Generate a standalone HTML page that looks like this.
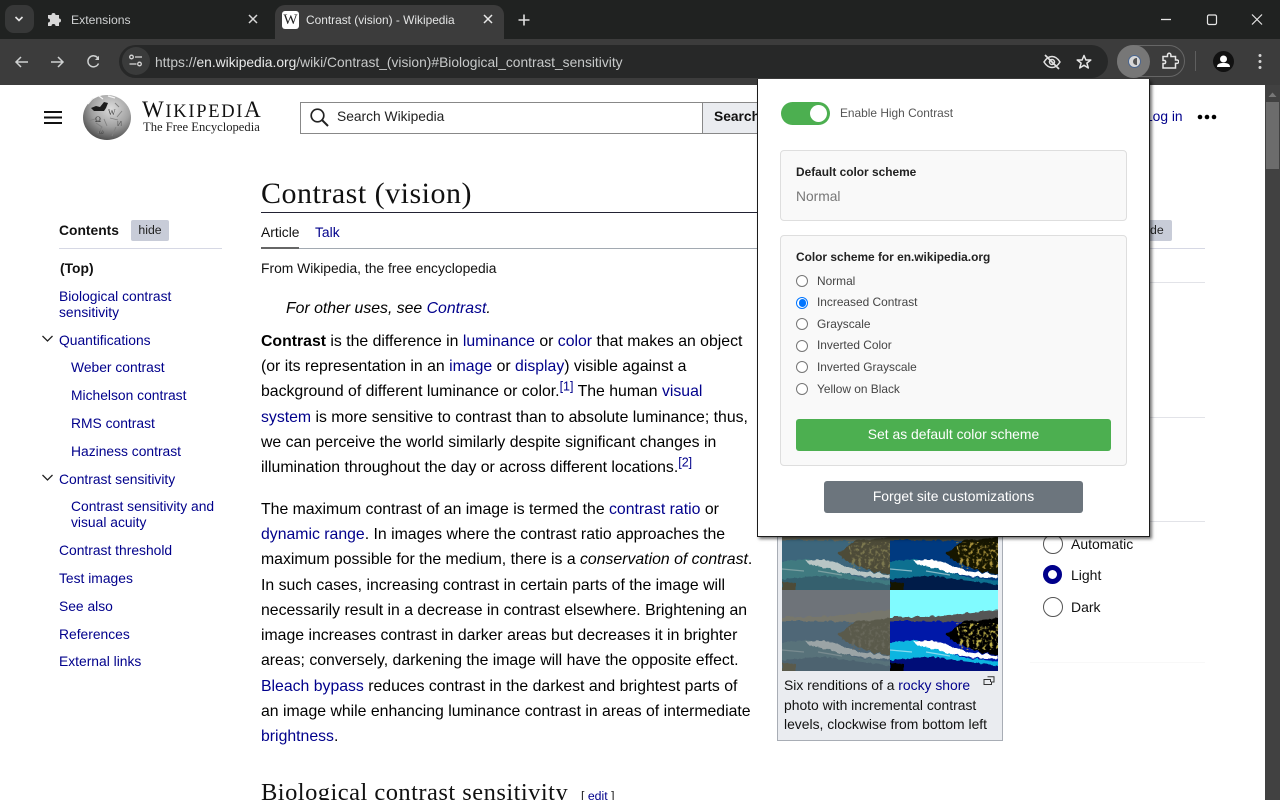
<!DOCTYPE html>
<html lang="en"><head><meta charset="utf-8"><title>Contrast (vision) - Wikipedia</title>
<style>
html,body{margin:0;padding:0;width:1280px;height:800px;overflow:hidden;background:#fff}
body{position:relative;font-family:"Liberation Sans",sans-serif;color:#000}
.a{position:absolute}
.t{position:absolute;white-space:nowrap;line-height:20px}
a{color:#00008b;text-decoration:none}
.b{font-size:15.82px;margin-top:1px}
sup{font-size:12.5px;line-height:0;vertical-align:5.5px}
.toc{font-size:13.85px;color:#00008b}
.rl{font-size:11.9px;color:#444;left:817px}
.rd{position:absolute;left:796px;width:10px;height:10px;border:1.3px solid #767676;border-radius:50%;background:#fff}
.bx{position:absolute;left:780px;width:345px;background:#f9f9f9;border:1px solid #dedede;border-radius:4px}
.btn{position:absolute;border-radius:3px;color:#fff;text-align:center;font-size:13.9px;line-height:30px}
.vr{position:absolute;width:18px;height:18px;border:1px solid #555;border-radius:50%;left:1043px;background:#fff}
</style></head><body>

<!-- Browser frame -->
<div class="a" style="left:0;top:0;width:1280px;height:39px;background:#202221"></div>
<div class="a" style="left:0;top:39px;width:1280px;height:46px;background:#3c3c3c"></div>
<div class="a" style="left:5px;top:5px;width:29px;height:28px;border-radius:9px;background:#373838"></div>
<svg class="a" style="left:13px;top:14px" width="12" height="10"><path d="M2.5 3 L6 6.500 L9.500 3" fill="none" stroke="#e6e6e6" stroke-width="1.600"/></svg>
<svg class="a" style="left:47px;top:12px" width="16" height="16" viewBox="0 0 16 16"><path fill="#d8d8d8" d="M1 4h3.500a2 2 0 1 1 4 0H12v3.500a2 2 0 1 1 0 4V15H8.500a2 2 0 1 0-4 0H1v-3.500a2 2 0 1 0 0-4z" transform="translate(0 -1)"/></svg>
<div class="t" style="left:71px;top:10px;font-size:12.200px;color:#cfd1d2">Extensions</div>
<svg class="a" style="left:247px;top:13px" width="12" height="12"><path d="M2 2 L10 10 M10 2 L2 10" stroke="#d8d8d8" stroke-width="1.500"/></svg>

<div class="a" style="left:275px;top:5px;width:229px;height:34px;background:#3c3c3c;border-radius:10px 10px 0 0"></div>
<div class="a" style="left:282px;top:11px;width:17px;height:18px;background:#fff;border-radius:3px;font:15px/18px 'Liberation Serif',serif;color:#222;text-align:center">W</div>
<div class="t" style="left:306px;top:10px;font-size:11.900px;color:#e3e4e4">Contrast (vision) - Wikipedia</div>
<svg class="a" style="left:482px;top:13px" width="12" height="12"><path d="M2 2 L10 10 M10 2 L2 10" stroke="#e8e8e8" stroke-width="1.500"/></svg>
<svg class="a" style="left:517px;top:13px" width="14" height="14"><path d="M7 1.500V12.500M1.500 7H12.500" stroke="#e0e0e0" stroke-width="1.600"/></svg>
<svg class="a" style="left:1160px;top:12px" width="104" height="16"><path d="M1 7.500H11" stroke="#e6e6e6" stroke-width="1.300"/><rect x="47.500" y="3" width="9" height="9.500" rx="1.500" fill="none" stroke="#e6e6e6" stroke-width="1.200"/><path d="M92 2.500L102 12.500M102 2.500L92 12.500" stroke="#e6e6e6" stroke-width="1.200"/></svg>

<!-- toolbar -->
<svg class="a" style="left:14px;top:53px" width="90" height="18" viewBox="0 0 90 18"><g fill="none" stroke="#cfd1d1" stroke-width="1.500"><path d="M2 9H14M7 4L2 9L7 14"/><path d="M37 9H49M44 4L49 9L44 14"/><path d="M84 5.200A5.500 5.500 0 1 0 84.500 10.500"/></g><path d="M85 2.800V7H81z" fill="#cfd1d1"/></svg>
<div class="a" style="left:119px;top:45px;width:989px;height:33px;border-radius:17px;background:#272828"></div>
<div class="a" style="left:122px;top:47px;width:28px;height:28px;border-radius:50%;background:#3a3b3b"></div>
<svg class="a" style="left:128px;top:53px" width="16" height="16"><g fill="none" stroke="#d4d4d4" stroke-width="1.300"><circle cx="3.500" cy="4" r="1.800"/><path d="M7 4H14"/><circle cx="11.500" cy="11" r="1.800"/><path d="M1.500 11H8.500"/></g></svg>
<div class="t" style="left:155px;top:52px;font-size:13.820px;color:#c7c9c9">https://<span style="color:#e9eaea">en.wikipedia.org</span>/wiki/Contrast_(vision)#Biological_contrast_sensitivity</div>
<svg class="a" style="left:1042px;top:53px" width="20" height="18" viewBox="0 0 20 18"><path d="M2 9C4.500 5 7 3.500 10 3.500S15.500 5 18 9C15.500 13 13 14.500 10 14.500S4.500 13 2 9Z" fill="none" stroke="#e0e0e0" stroke-width="1.500"/><circle cx="10" cy="9" r="2.500" fill="none" stroke="#e0e0e0" stroke-width="1.500"/><path d="M3 2L17 16" stroke="#e0e0e0" stroke-width="1.700"/></svg>
<svg class="a" style="left:1076px;top:54px" width="16" height="16" viewBox="0 0 16 16"><path d="M8 1.500L9.900 6H14.800L10.900 9.100L12.300 14L8 11.200L3.700 14L5.100 9.100L1.200 6H6.100Z" fill="none" stroke="#e6e6e6" stroke-width="1.500" stroke-linejoin="round"/></svg>
<div class="a" style="left:1117px;top:45px;width:68px;height:32px;border:1px solid #666;border-radius:17px;box-sizing:border-box"></div>
<div class="a" style="left:1117px;top:45px;width:33px;height:33px;border-radius:50%;background:#777"></div>
<div class="a" style="left:1128px;top:55px;width:13px;height:13px;border-radius:50%;background:#d7d7d7;border:1px solid #4a6690;box-sizing:border-box"></div>
<div class="a" style="left:1133px;top:58px;width:3.500px;height:7px;background:#555;border-radius:4px 0 0 4px"></div>
<svg class="a" style="left:1161px;top:52px" width="18" height="18" viewBox="0 0 18 18"><path d="M2 4.500H6.500V3A1.700 1.700 0 0 1 9.900 3V4.500H14.500V8H16A1.700 1.700 0 0 1 16 11.400H14.500V16H2V11.500H4A2 2 0 0 0 4 8.500H2Z" fill="none" stroke="#e6e6e6" stroke-width="1.500"/></svg>
<div class="a" style="left:1195px;top:51px;width:1px;height:20px;background:#5f5f5f"></div>
<div class="a" style="left:1213px;top:51px;width:21px;height:21px;border-radius:50%;background:#111"></div>
<svg class="a" style="left:1213px;top:51px" width="21" height="21"><circle cx="10.500" cy="8" r="3.500" fill="#fff"/><path d="M4 16C4 12.500 7 12 10.500 12S17 12.500 17 16Z" fill="#fff"/></svg>
<svg class="a" style="left:1257px;top:53px" width="6" height="18"><circle cx="3" cy="2.500" r="1.500" fill="#d6d6d6"/><circle cx="3" cy="8.500" r="1.500" fill="#d6d6d6"/><circle cx="3" cy="14.500" r="1.500" fill="#d6d6d6"/></svg>

<!-- Scrollbar -->
<div class="a" style="left:1265px;top:85px;width:15px;height:715px;background:#414141"></div>
<svg class="a" style="left:1266px;top:90px" width="13" height="8"><path d="M2.500 7L6.500 2.500L10.500 7Z" fill="#777"/></svg>
<div class="a" style="left:1266px;top:102px;width:13px;height:67px;background:#6c6c6c"></div>

<!-- Wikipedia header -->
<svg class="a" style="left:44px;top:111px" width="18" height="14"><path d="M0 1H18M0 6.500H18M0 12H18" stroke="#111" stroke-width="2"/></svg>
<svg class="a" style="left:82px;top:93px" width="50" height="48" viewBox="0 0 50 48">
<defs><radialGradient id="g" cx=".58" cy=".3" r=".8"><stop offset="0" stop-color="#dcdcdc"/><stop offset=".5" stop-color="#a2a2a2"/><stop offset="1" stop-color="#383838"/></radialGradient></defs>
<ellipse cx="25" cy="24.500" rx="24" ry="22.500" fill="url(#g)"/>
<path d="M9 15L14 13L18 14L22 9L26 10L24 15L22 18L12 18Z" fill="#1c1c1c"/>
<path d="M6 11L11 5M17 3L21 6M26 3L33 5" stroke="#f4f4f4" stroke-width="1.200" fill="none"/>
<path d="M33 10L37 14M40 18L35 24M14 30L20 34L16 40M28 25L36 27M34 34L30 43M6 28L13 26M22 26L25 33" stroke="#808080" stroke-width=".9" fill="none"/>
<text x="13" y="29" font-family="Liberation Serif,serif" font-size="8" fill="#333">Ω</text>
<text x="26" y="22" font-family="Liberation Serif,serif" font-size="8" fill="#444">W</text>
<text x="35" y="33" font-family="Liberation Sans,sans-serif" font-size="7" fill="#555">И</text>
<text x="17" y="41" font-family="Liberation Sans,sans-serif" font-size="6" fill="#444">ω</text>
</svg>
<div class="t" style="left:142px;top:99px;font:23px/22px 'Liberation Serif',serif;color:#111;letter-spacing:1.700px">W<span style="font-size:18.500px">IKIPEDI</span>A</div>
<div class="t" style="left:143px;top:119px;font:12.600px/16px 'Liberation Serif',serif;color:#222">The Free Encyclopedia</div>
<div class="a" style="left:300px;top:102px;width:403px;height:32px;border:1px solid #888;box-sizing:border-box;background:#fff"></div>
<svg class="a" style="left:309px;top:107px" width="22" height="22"><circle cx="8.500" cy="8.500" r="6.300" fill="none" stroke="#222" stroke-width="1.700"/><path d="M13 13L19 19" stroke="#222" stroke-width="2"/></svg>
<div class="t" style="left:337px;top:107px;font-size:13.800px;color:#222">Search Wikipedia</div>
<div class="a" style="left:702px;top:102px;width:70px;height:32px;background:#eaecf0;border:1px solid #888;box-sizing:border-box"></div>
<div class="t" style="left:714px;top:107px;font-size:13.800px;font-weight:bold;color:#111">Search</div>
<div class="t" style="left:1145px;top:107px;font-size:13.800px"><a>Log in</a></div>
<svg class="a" style="left:1197px;top:113px" width="20" height="8"><circle cx="3" cy="4" r="2.300"/><circle cx="10" cy="4" r="2.300"/><circle cx="17" cy="4" r="2.300"/></svg>

<!-- TOC -->
<div class="t" style="left:59px;top:220px;font-size:13.850px;font-weight:bold;color:#111">Contents</div>
<div class="a" style="left:131px;top:220px;width:38px;height:21px;background:#c8ccd8;border-radius:2px;font-size:12.300px;line-height:20px;text-align:center;color:#222">hide</div>
<div class="a" style="left:59px;top:248px;width:163px;height:1px;background:#d6d8e4"></div>
<div class="t toc" style="left:60px;top:258px;font-weight:bold;color:#111">(Top)</div>
<div class="t toc" style="left:59px;top:286px">Biological contrast</div>
<div class="t toc" style="left:59px;top:302px">sensitivity</div>
<div class="t toc" style="left:59px;top:330px">Quantifications</div>
<div class="t toc" style="left:71px;top:357px">Weber contrast</div>
<div class="t toc" style="left:71px;top:385px">Michelson contrast</div>
<div class="t toc" style="left:71px;top:413px">RMS contrast</div>
<div class="t toc" style="left:71px;top:441px">Haziness contrast</div>
<div class="t toc" style="left:59px;top:469px">Contrast sensitivity</div>
<div class="t toc" style="left:71px;top:496px">Contrast sensitivity and</div>
<div class="t toc" style="left:71px;top:512px">visual acuity</div>
<div class="t toc" style="left:59px;top:540px">Contrast threshold</div>
<div class="t toc" style="left:59px;top:568px">Test images</div>
<div class="t toc" style="left:59px;top:596px">See also</div>
<div class="t toc" style="left:59px;top:624px">References</div>
<div class="t toc" style="left:59px;top:651px">External links</div>
<svg class="a" style="left:41px;top:334px" width="13" height="150"><path d="M1.500 2L6.500 7L11.500 2M1.500 141L6.500 146L11.500 141" fill="none" stroke="#222" stroke-width="1.300"/></svg>

<!-- Article -->
<div class="t" style="left:261px;top:176px;font:30px/36px 'Liberation Serif',serif;color:#111;letter-spacing:.5px">Contrast (vision)</div>
<div class="a" style="left:261px;top:212px;width:760px;height:1px;background:#223"></div>
<div class="t" style="left:261px;top:222px;font-size:13.850px;color:#111">Article</div>
<div class="t" style="left:315px;top:222px;font-size:13.850px"><a>Talk</a></div>
<div class="a" style="left:261px;top:248px;width:760px;height:1px;background:#a2a9b1"></div>
<div class="a" style="left:261px;top:247px;width:38px;height:2px;background:#666"></div>
<div class="t" style="left:261px;top:258px;font-size:13.850px;color:#111">From Wikipedia, the free encyclopedia</div>
<div class="t b" style="left:286px;top:298px;font-style:italic">For other uses, see <a>Contrast</a>.</div>

<div class="t b" style="left:261px;top:331px"><b>Contrast</b> is the difference in <a>luminance</a> or <a>color</a> that makes an object</div>
<div class="t b" style="left:261px;top:356px">(or its representation in an <a>image</a> or <a>display</a>) visible against a</div>
<div class="t b" style="left:261px;top:381px">background of different luminance or color.<a><sup>[1]</sup></a> The human <a>visual</a></div>
<div class="t b" style="left:261px;top:407px"><a>system</a> is more sensitive to contrast than to absolute luminance; thus,</div>
<div class="t b" style="left:261px;top:432px">we can perceive the world similarly despite significant changes in</div>
<div class="t b" style="left:261px;top:457px">illumination throughout the day or across different locations.<a><sup>[2]</sup></a></div>

<div class="t b" style="left:261px;top:499px">The maximum contrast of an image is termed the <a>contrast ratio</a> or</div>
<div class="t b" style="left:261px;top:524px"><a>dynamic range</a>. In images where the contrast ratio approaches the</div>
<div class="t b" style="left:261px;top:549px">maximum possible for the medium, there is a <i>conservation of contrast</i>.</div>
<div class="t b" style="left:261px;top:575px">In such cases, increasing contrast in certain parts of the image will</div>
<div class="t b" style="left:261px;top:600px">necessarily result in a decrease in contrast elsewhere. Brightening an</div>
<div class="t b" style="left:261px;top:625px">image increases contrast in darker areas but decreases it in brighter</div>
<div class="t b" style="left:261px;top:650px">areas; conversely, darkening the image will have the opposite effect.</div>
<div class="t b" style="left:261px;top:676px"><a>Bleach bypass</a> reduces contrast in the darkest and brightest parts of</div>
<div class="t b" style="left:261px;top:701px">an image while enhancing luminance contrast in areas of intermediate</div>
<div class="t b" style="left:261px;top:726px"><a>brightness</a>.</div>
<div class="t" style="left:261px;top:778px;font:24.500px/30px 'Liberation Serif',serif;color:#111;letter-spacing:.47px">Biological contrast sensitivity</div>
<div class="t" style="left:581px;top:786px;font-size:12.300px;color:#222">[ <a>edit</a> ]</div>

<!-- Figure -->
<div class="a" style="left:777px;top:500px;width:226px;height:241px;background:#eaecf0;border:1px solid #a8adb5;box-sizing:border-box"></div>
<svg class="a" style="left:782px;top:509px" width="216" height="162" viewBox="0 0 216 162">
<defs>
<filter id="sp" x="0" y="0" width="100%" height="100%"><feTurbulence type="fractalNoise" baseFrequency=".3" numOctaves="2" seed="4" result="t"/><feColorMatrix in="t" type="matrix" values="0 0 0 0 0 0 0 0 0 0 0 0 0 0 0 0 0 0 5 -2.500" result="m"/><feComposite in="SourceGraphic" in2="m" operator="in"/></filter>
<filter id="ro" x="-5%" y="-5%" width="110%" height="110%"><feTurbulence type="fractalNoise" baseFrequency=".2" numOctaves="2" seed="7"/><feDisplacementMap in="SourceGraphic" scale="4" xChannelSelector="R" yChannelSelector="G"/></filter>
<clipPath id="cc"><rect width="108" height="81"/></clipPath>
<g id="sc"><g clip-path="url(#cc)">
<rect width="108" height="29" fill="var(--sky)"/>
<rect y="28" width="108" height="53" fill="var(--sea)"/>
<g filter="url(#ro)">
<path d="M-4 27L35 27L70 24L112 19V31L70 32L30 31L-4 31Z" fill="var(--far)"/>
<path d="M0 53L26 50L50 60L75 68L112 72V90H-4V55Z" fill="var(--deep)"/>
<path d="M0 70L40 67L80 72L112 76V90H-4Z" fill="var(--low)"/>
<path d="M56 44L66 37L72 32L90 30L112 28V66L92 63L72 55L60 50Z" fill="var(--rock)"/>
<path d="M23 52L35 50L50 52L60 56L80 62L108 66V69L85 68L62 64L45 59L30 56Z" fill="var(--foam)"/>
<path d="M0 72L14 74L14 84H0Z" fill="var(--rock)"/>
</g>
<path d="M66 33H108V60H70Z" fill="var(--hi)" filter="url(#sp)"/>
<path d="M0 60L22 62M36 62L60 66" stroke="var(--foam)" stroke-width="1.200" opacity=".5"/>
</g></g></defs>
<g style="--sky:#7c8a92;--sea:#3d667c;--far:#68695a;--rock:#4e4c38;--hi:#7c7850;--foam:#b9c6c5;--deep:#3f7a80;--low:#35606e"><use href="#sc"/></g>
<g transform="translate(108 0)" style="--sky:#3b9bc0;--sea:#003a80;--far:#4a4a3a;--rock:#161505;--hi:#a8903a;--foam:#fff;--deep:#0a6f90;--low:#031f4a"><use href="#sc"/></g>
<g transform="translate(0 81)" style="--sky:#6e7379;--sea:#4f6777;--far:#77776c;--rock:#5a5a4c;--hi:#68675a;--foam:#9ba4a6;--deep:#58727a;--low:#4e6470"><use href="#sc"/></g>
<g transform="translate(108 81)" style="--sky:#80fbff;--sea:#0018a8;--far:#555;--rock:#060600;--hi:#bcae48;--foam:#fff;--deep:#0fb5e0;--low:#001078"><use href="#sc"/></g>
</svg>
<div class="t" style="left:784px;top:675px;font-size:13.900px;color:#111">Six renditions of a <a>rocky shore</a></div>
<div class="t" style="left:784px;top:695px;font-size:13.900px;color:#111">photo with incremental contrast</div>
<div class="t" style="left:784px;top:714px;font-size:13.900px;color:#111">levels, clockwise from bottom left</div>
<svg class="a" style="left:983px;top:676px" width="12" height="10"><path d="M4.500 .8H11V6H8.500V8.500H1V3.500H7.500V6" fill="none" stroke="#333" stroke-width="1"/></svg>

<!-- Right panel -->
<div class="a" style="left:1150px;top:220px;width:22px;height:21px;background:#c8ccd8;border-radius:0 2px 2px 0"></div>
<div class="t" style="left:1150px;top:220px;font-size:12.300px;color:#222">de</div>
<div class="a" style="left:1150px;top:248px;width:55px;height:1px;background:#d6d8e4"></div>
<div class="a" style="left:1150px;top:282px;width:55px;height:1px;background:#e2e3e8"></div>
<div class="a" style="left:1150px;top:417px;width:55px;height:1px;background:#e2e3e8"></div>
<div class="a" style="left:1030px;top:521px;width:175px;height:1px;background:#e2e3e8"></div>
<div class="a" style="left:1030px;top:662px;width:175px;height:1px;background:#f8f8f8"></div>
<div class="vr" style="top:534px"></div>
<div class="t" style="left:1071px;top:534px;font-size:14px;color:#111">Automatic</div>
<div class="vr" style="top:565px;width:9px;height:9px;border:5.500px solid #00008b"></div>
<div class="t" style="left:1071px;top:565px;font-size:14px;color:#111">Light</div>
<div class="vr" style="top:597px"></div>
<div class="t" style="left:1071px;top:597px;font-size:14px;color:#111">Dark</div>

<!-- Popup -->
<div class="a" style="left:757px;top:79px;width:393px;height:458px;background:#fff;border:1px solid #1c1c1c;border-top:0;box-sizing:border-box;box-shadow:2px 2px 3px rgba(0,0,0,.55)"></div>
<div class="a" style="left:781px;top:102px;width:49px;height:23px;border-radius:12px;background:#4caf50"></div>
<div class="a" style="left:810px;top:105px;width:17px;height:17px;border-radius:50%;background:#fff"></div>
<div class="t" style="left:840px;top:103px;font-size:11.900px;color:#555">Enable High Contrast</div>

<div class="bx" style="top:150px;height:69px"></div>
<div class="t" style="left:796px;top:162px;font-size:11.900px;font-weight:bold;color:#222">Default color scheme</div>
<div class="t" style="left:796px;top:187px;font-size:13.800px;color:#777">Normal</div>

<div class="bx" style="top:235px;height:229px"></div>
<div class="t" style="left:796px;top:247px;font-size:11.900px;font-weight:bold;color:#222">Color scheme for en.wikipedia.org</div>
<div class="rd" style="top:274.700px"></div><div class="t rl" style="top:271px">Normal</div>
<div class="rd" style="top:296.700px;border-color:#0075ff"></div><div class="a" style="left:798.600px;top:299.300px;width:7.600px;height:7.600px;border-radius:50%;background:#0075ff"></div><div class="t rl" style="top:292px">Increased Contrast</div>
<div class="rd" style="top:318px"></div><div class="t rl" style="top:314px">Grayscale</div>
<div class="rd" style="top:340px"></div><div class="t rl" style="top:335px">Inverted Color</div>
<div class="rd" style="top:361.400px"></div><div class="t rl" style="top:357px">Inverted Grayscale</div>
<div class="rd" style="top:382.700px"></div><div class="t rl" style="top:379px">Yellow on Black</div>
<div class="btn" style="left:796px;top:419px;width:315px;height:32px;background:#4caf50">Set as default color scheme</div>
<div class="btn" style="left:824px;top:481px;width:259px;height:32px;background:#6c757d">Forget site customizations</div>
</body></html>
